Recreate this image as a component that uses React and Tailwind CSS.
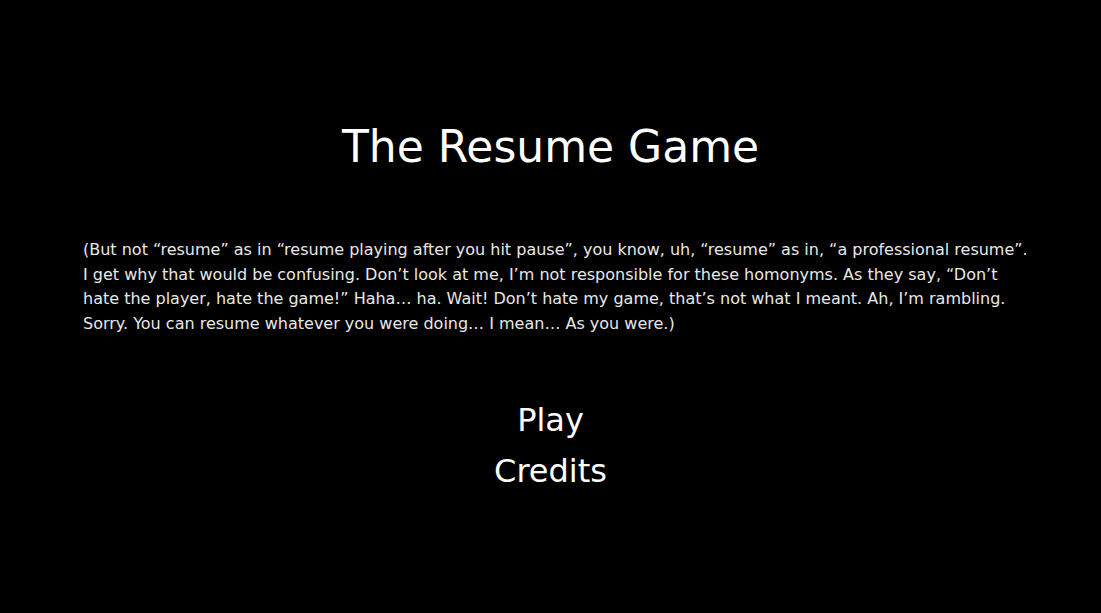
import React from 'react';

const lines = [
    '(But not \u201cresume\u201d as in \u201cresume playing after you hit pause\u201d, you know, uh, \u201cresume\u201d as in, \u201ca professional resume\u201d.',
    'I get why that would be confusing. Don\u2019t look at me, I\u2019m not responsible for these homonyms. As they say, \u201cDon\u2019t',
    'hate the player, hate the game!\u201d Haha\u2026 ha. Wait! Don\u2019t hate my game, that\u2019s not what I meant. Ah, I\u2019m rambling.',
    'Sorry. You can resume whatever you were doing\u2026 I mean\u2026 As you were.)',
];

export default function App() {
    return (
        <div className="w-full h-[613px] bg-black overflow-hidden flex flex-col items-center font-['DejaVu_Sans',sans-serif]">
            {/* Title */}
            <h1 className="mt-[115px] text-[44px] leading-[64px] text-white">The Resume Game</h1>

            {/* Intro blurb */}
            <p className="mt-[59px] self-start pl-[83px] text-[16px] leading-[24.5px] text-[#e8e8e8]">
                {lines.map((l, i) => (
                    <span key={i} className="block whitespace-nowrap">{l}</span>
                ))}
            </p>

            {/* Menu */}
            <nav className="mt-[59px] flex flex-col items-center text-[32px] leading-[51px] text-white">
                <button className="cursor-pointer">Play</button>
                <button className="cursor-pointer">Credits</button>
            </nav>
        </div>
    );
}
